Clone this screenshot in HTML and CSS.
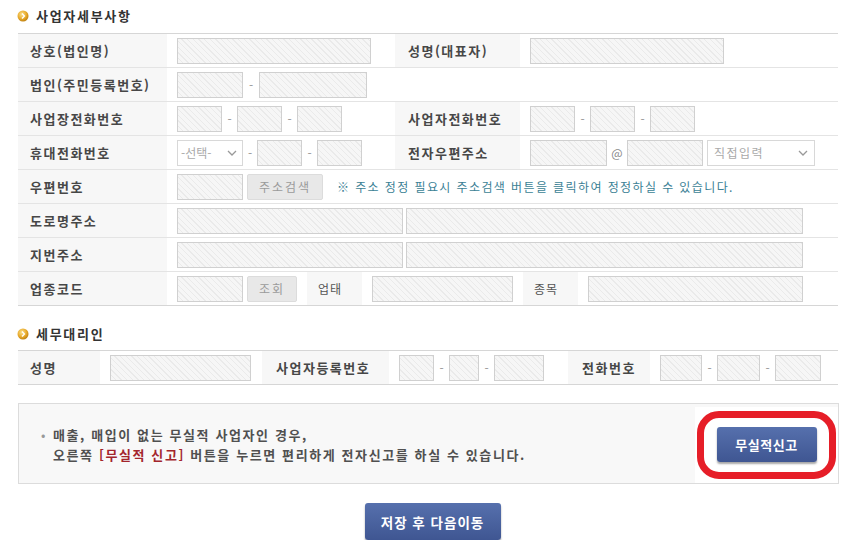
FILE: index.html
```html
<!DOCTYPE html>
<html lang="ko">
<head>
<meta charset="utf-8">
<title>사업자세부사항</title>
<link rel="stylesheet" href="styles.css">
</head>
<body>
<div class="page">
  <h2 class="sec-title">
    <svg class="ball" width="12" height="12" viewBox="0 0 12 12"><defs><radialGradient id="g1" cx="0.4" cy="0.35" r="0.7"><stop offset="0" stop-color="#fbe08a"/><stop offset="0.6" stop-color="#e7a92a"/><stop offset="1" stop-color="#b97b0d"/></radialGradient></defs><circle cx="6" cy="6" r="5.5" fill="url(#g1)"/><path d="M5 3.6 L7.4 6 L5 8.4" fill="none" stroke="#fff" stroke-width="1.4"/></svg>
    사업자세부사항
  </h2>
  <table class="form t1">
    <colgroup><col style="width:149px"><col style="width:228px"><col style="width:125px"><col></colgroup>
    <tr>
      <th>상호(법인명)</th>
      <td><span class="inp" style="width:194px"></span></td>
      <th class="th2">성명(대표자)</th>
      <td><span class="inp" style="width:194px"></span></td>
    </tr>
    <tr>
      <th>법인(주민등록번호)</th>
      <td colspan="3"><div class="fl"><span class="inp" style="width:66px"></span><span class="sep w16">-</span><span class="inp" style="width:108px"></span></div></td>
    </tr>
    <tr>
      <th>사업장전화번호</th>
      <td><div class="fl"><span class="inp" style="width:45px"></span><span class="sep">-</span><span class="inp" style="width:45px"></span><span class="sep">-</span><span class="inp" style="width:45px"></span></div></td>
      <th class="th2">사업자전화번호</th>
      <td><div class="fl"><span class="inp" style="width:45px"></span><span class="sep">-</span><span class="inp" style="width:45px"></span><span class="sep">-</span><span class="inp" style="width:45px"></span></div></td>
    </tr>
    <tr>
      <th>휴대전화번호</th>
      <td><div class="fl"><span class="sel" style="width:66px"><span class="ph">-선택-</span><svg class="chev" width="10" height="6" viewBox="0 0 10 6"><path d="M1 1 L5 5 L9 1" fill="none" stroke="#999" stroke-width="1.3"/></svg></span><span class="sep w14">-</span><span class="inp" style="width:45px"></span><span class="sep">-</span><span class="inp" style="width:45px"></span></div></td>
      <th class="th2">전자우편주소</th>
      <td><div class="fl"><span class="inp" style="width:77px"></span><span class="at">@</span><span class="inp" style="width:76px"></span><span class="sel sel-wide" style="width:108px"><span class="ph">직접입력</span><svg class="chev" width="10" height="6" viewBox="0 0 10 6"><path d="M1 1 L5 5 L9 1" fill="none" stroke="#999" stroke-width="1.3"/></svg></span></div></td>
    </tr>
    <tr>
      <th>우편번호</th>
      <td colspan="3"><div class="fl"><span class="inp" style="width:66px"></span><span class="gbtn" style="width:76px">주소검색</span><span class="note">※ 주소 정정 필요시 주소검색 버튼을 클릭하여 정정하실 수 있습니다.</span></div></td>
    </tr>
    <tr>
      <th>도로명주소</th>
      <td colspan="3"><div class="fl g3"><span class="inp" style="width:226px"></span><span class="inp" style="width:397px"></span></div></td>
    </tr>
    <tr>
      <th>지번주소</th>
      <td colspan="3"><div class="fl g3"><span class="inp" style="width:226px"></span><span class="inp" style="width:397px"></span></div></td>
    </tr>
    <tr>
      <th>업종코드</th>
      <td colspan="3" class="split">
        <div class="fl stretch">
          <div class="fl cellpad"><span class="inp" style="width:66px"></span><span class="gbtn" style="width:50px">조회</span></div>
          <div class="sublabel">업태</div>
          <div class="fl cellpad2 w161"><span class="inp" style="width:141px"></span></div>
          <div class="sublabel">종목</div>
          <div class="fl cellpad2"><span class="inp" style="width:215px"></span></div>
        </div>
      </td>
    </tr>
  </table>

  <h2 class="sec-title sec2">
    <svg class="ball" width="12" height="12" viewBox="0 0 12 12"><defs><radialGradient id="g2" cx="0.4" cy="0.35" r="0.7"><stop offset="0" stop-color="#fbe08a"/><stop offset="0.6" stop-color="#e7a92a"/><stop offset="1" stop-color="#b97b0d"/></radialGradient></defs><circle cx="6" cy="6" r="5.5" fill="url(#g2)"/><path d="M5 3.6 L7.4 6 L5 8.4" fill="none" stroke="#fff" stroke-width="1.4"/></svg>
    세무대리인
  </h2>
  <table class="form t2">
    <colgroup><col style="width:82px"><col style="width:162px"><col style="width:127px"><col style="width:179px"><col style="width:82px"><col></colgroup>
    <tr>
      <th>성명</th>
      <td><span class="inp" style="width:141px"></span></td>
      <th class="th3">사업자등록번호</th>
      <td><div class="fl"><span class="inp" style="width:35px"></span><span class="sep">-</span><span class="inp" style="width:30px"></span><span class="sep">-</span><span class="inp" style="width:50px"></span></div></td>
      <th class="th3">전화번호</th>
      <td><div class="fl"><span class="inp" style="width:42px"></span><span class="sep">-</span><span class="inp" style="width:43px"></span><span class="sep">-</span><span class="inp" style="width:46px"></span></div></td>
    </tr>
  </table>

  <div class="notice">
    <div class="notice-text">
      <p><span class="dot">•</span>매출, 매입이 없는 무실적 사업자인 경우,</p>
      <p>오른쪽 <em>[무실적 신고]</em> 버튼을 누르면 편리하게 전자신고를 하실 수 있습니다.</p>
    </div>
    <div class="notice-action">
      <div class="ring"><span class="bbtn small">무실적신고</span></div>
    </div>
  </div>

  <div class="bottom">
    <span class="bbtn big">저장 후 다음이동</span>
  </div>
</div>
</body>
</html>
```

FILE: styles.css
```css
* { box-sizing: border-box; }
html, body { margin: 0; padding: 0; background: #fff; }
body {
  font-family: "Noto Sans CJK KR", "Noto Sans", sans-serif;
  color: #444;
}
.page { padding: 0 27px 0 18px; width: 865px; }

.sec-title {
  margin: 0 0 7px -1px;
  padding-top: 6px;
  height: 26px;
  line-height: 20px;
  font-size: 13px;
  font-weight: 700;
  letter-spacing: 1.7px;
  color: #333;
  display: flex;
  align-items: flex-start;
}
.sec-title .ball { margin: 4px 7px 0 0; flex: none; }
.sec2 { padding-top: 18px; height: 44px; margin-bottom: 0; }

.form {
  width: 820px;
  border-collapse: collapse;
  table-layout: fixed;
  border-top: 1px solid #d6d6d6;
}
.form tr { border-bottom: 1px solid #e4e4e4; }
.form tr:last-child { border-bottom: 1px solid #d6d6d6; }
.form th, .form td {
  height: 34px;
  padding: 0;
  vertical-align: middle;
}
.form th {
  background: #f7f7f7;
  text-align: left;
  font-size: 13px;
  font-weight: 700;
  letter-spacing: 1.5px;
  color: #474747;
  padding-left: 12px;
  white-space: nowrap;
}
.form th.th2 { padding-left: 13px; }
.form td { padding-left: 10px; }
.t2 th { padding-left: 12px; }
.t2 th.th3 { padding-left: 14px; }

.fl { display: flex; align-items: center; }
.g3 { gap: 3px; }

.inp {
  display: inline-block;
  height: 26px;
  border: 1px solid #d0d0d0;
  background: repeating-linear-gradient(45deg, #f6f6f6 0 3px, #eaeaea 3px 4px);
  vertical-align: middle;
  flex: none;
}
.sep {
  width: 15px;
  text-align: center;
  font-size: 12px;
  color: #999;
  flex: none;
}
.sep.w16 { width: 16px; }
.sep.w14 { width: 14px; }
.at {
  width: 20px;
  text-align: center;
  font-size: 12px;
  color: #888;
  flex: none;
}

.sel {
  height: 26px;
  border: 1px solid #d8d8d8;
  background: #fff;
  display: flex;
  align-items: center;
  justify-content: space-between;
  padding: 0 5px 0 3px;
  font-size: 12px;
  color: #aaa;
  flex: none;
}
.sel-wide { margin-left: 4px; padding: 0 6px 0 6px; letter-spacing: 1.5px; }
.chev { flex: none; }

.gbtn {
  height: 26px;
  margin-left: 4px;
  background: #e8e8e8;
  border: 1px solid #dcdcdc;
  border-radius: 2px;
  color: #9a9a9a;
  font-size: 12px;
  letter-spacing: 2px;
  display: flex;
  align-items: center;
  justify-content: center;
  flex: none;
}
.note {
  margin-left: 14px;
  font-size: 12px;
  letter-spacing: 1.4px;
  color: #3b7f95;
  white-space: nowrap;
}

.form td.split { padding: 0; }
.stretch { align-items: stretch; height: 33px; }
.cellpad { padding-left: 10px; width: 140px; align-items: center; }
.cellpad2 { padding-left: 10px; align-items: center; }
.w161 { width: 161px; }
.sublabel {
  width: 55px;
  background: #f7f7f7;
  font-size: 12px;
  color: #555;
  letter-spacing: 1px;
  display: flex;
  align-items: center;
  padding-left: 11px;
}

.notice {
  margin-top: 18px;
  width: 821px;
  height: 81px;
  border: 1px solid #dcdcdc;
  background: #f8f8f8;
  display: flex;
}
.notice-text {
  flex: 1;
  display: flex;
  flex-direction: column;
  justify-content: center;
  align-items: flex-start;
  padding-left: 21px;
  padding-top: 2px;
}
.notice-text p {
  margin: 0;
  padding-left: 13px;
  font-size: 13px;
  line-height: 20px;
  font-weight: 700;
  letter-spacing: 1.6px;
  color: #505050;
  position: relative;
  white-space: nowrap;
}
.notice-text .dot {
  position: absolute;
  left: 1px;
  top: 0;
  color: #999;
  font-weight: 400;
  letter-spacing: 0;
}
.notice-text em { font-style: normal; color: #a3252c; }

.notice-action {
  width: 143px;
  margin: 3px 0 0 0;
  background: #fff;
  display: flex;
  align-items: center;
  justify-content: center;
  padding: 3px 2px 4px 2px;
}
.ring {
  width: 139px;
  height: 68px;
  border: 7px solid #e61e28;
  border-radius: 22px;
  display: flex;
  align-items: center;
  justify-content: center;
}

.bbtn {
  display: flex;
  align-items: center;
  justify-content: center;
  color: #fff;
  font-weight: 700;
  font-size: 13px;
  letter-spacing: 0.5px;
  background: linear-gradient(#5670ad, #3f5692);
  border-radius: 3px;
  box-shadow: 0 2px 2px rgba(0,0,0,0.35);
}
.bbtn.small { width: 100px; height: 35px; }
.bbtn.big { width: 136px; height: 37px; font-size: 13.5px; letter-spacing: 1px; }

.bottom {
  margin-top: 19px;
  width: 865px;
  margin-left: -18px;
  display: flex;
  justify-content: center;
}
```
